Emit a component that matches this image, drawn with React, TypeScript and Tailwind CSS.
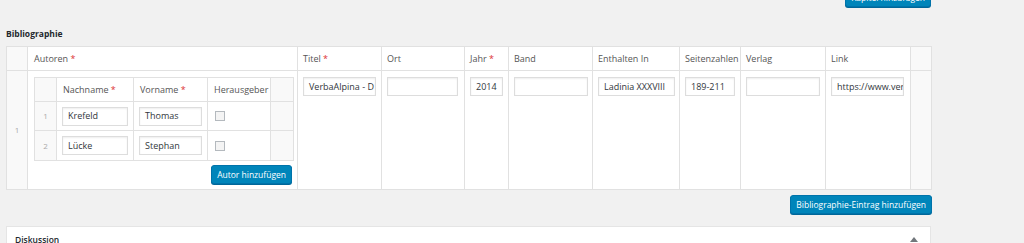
import React from 'react'

const outerCols = [
  { label: 'Titel', required: true, width: 84, value: 'VerbaAlpina - D', inputW: 73 },
  { label: 'Ort', width: 83, value: '', inputW: 71 },
  { label: 'Jahr', required: true, width: 44, value: '2014', inputW: 33 },
  { label: 'Band', width: 84, value: '', inputW: 74 },
  { label: 'Enthalten In', width: 87, value: 'Ladinia XXXVIII', inputW: 77 },
  { label: 'Seitenzahlen', width: 61, value: '189-211', inputW: 50 },
  { label: 'Verlag', width: 85, value: '', inputW: 74 },
  { label: 'Link', width: 85, value: 'https://www.ver', inputW: 73 },
]

const authors = [
  { last: 'Krefeld', first: 'Thomas' },
  { last: 'Lücke', first: 'Stephan' },
]

function Star() {
  return <span className="text-[#dc3232]"> *</span>
}

function TextField({ value, width }: { value: string; width: number }) {
  return (
    <div
      className="flex h-[19px] items-center overflow-hidden whitespace-nowrap border border-[#dddddd] bg-white px-[5px] text-[9px] text-[#32373c] shadow-[inset_0_1px_2px_rgba(0,0,0,0.07)]"
      style={{ width }}
    >
      {value}
    </div>
  )
}

function BlueButton({ children }: { children: React.ReactNode }) {
  return (
    <button
      type="button"
      className="h-[19px] rounded-[3px] border border-[#0073aa] bg-[#0085ba] px-[5px] text-[8.5px] leading-[17px] text-white shadow-[0_1px_0_#006799]"
    >
      {children}
    </button>
  )
}

function AuthorsTable() {
  return (
    <div className="ml-[6px] mt-[6px] w-[259px]">
      <table className="w-[259px] table-fixed border-collapse border border-[#e1e1e1] text-[9px] text-[#555]">
        <colgroup>
          <col className="w-[22px]" />
          <col className="w-[77px]" />
          <col className="w-[74px]" />
          <col className="w-[63px]" />
          <col className="w-[23px]" />
        </colgroup>
        <thead>
          <tr className="h-[24px]">
            <th className="border border-[#e1e1e1] bg-[#f9f9f9]" />
            <th className="border border-[#e1e1e1] bg-white pl-[6px] text-left font-normal">
              Nachname<Star />
            </th>
            <th className="border border-[#e1e1e1] bg-white pl-[6px] text-left font-normal">
              Vorname<Star />
            </th>
            <th className="border border-[#e1e1e1] bg-white pl-[6px] text-left font-normal">Herausgeber</th>
            <th className="border border-[#e1e1e1] bg-[#f9f9f9]" />
          </tr>
        </thead>
        <tbody>
          {authors.map((author, index) => (
            <tr key={author.last} className={index === 0 ? 'h-[29px]' : 'h-[30px]'}>
              <td className="border border-[#e1e1e1] bg-[#f9f9f9] text-center text-[8px] text-[#aaa]">{index + 1}</td>
              <td className="border border-[#e1e1e1] bg-white pl-[5px]">
                <TextField value={author.last} width={66} />
              </td>
              <td className="border border-[#e1e1e1] bg-white pl-[5px]">
                <TextField value={author.first} width={63} />
              </td>
              <td className="border border-[#e1e1e1] bg-white pl-[7px]">
                <span className="block h-[10px] w-[10px] border border-[#b4b9be] bg-[#f4f4f4]" />
              </td>
              <td className="border border-[#e1e1e1] bg-[#f9f9f9]" />
            </tr>
          ))}
        </tbody>
      </table>
      <div className="mt-[4px] flex justify-end pr-[1px]">
        <BlueButton>Autor hinzufügen</BlueButton>
      </div>
    </div>
  )
}

export default function App() {
  return (
    <div className="h-[243px] w-[1024px] overflow-hidden bg-[#f1f1f1] font-['Open_Sans','Liberation_Sans',sans-serif] text-[#32373c]">
      <div className="mt-[-12px] flex w-[931px] justify-end">
        <BlueButton>Kapitel hinzufügen</BlueButton>
      </div>

      <h3 className="ml-[6px] mt-[20px] text-[8.5px] font-bold leading-[14px] text-[#23282d]">Bibliographie</h3>

      <table className="ml-[6px] mt-[5px] w-[925px] table-fixed border-collapse border border-[#e1e1e1] text-[9px] text-[#555]">
        <colgroup>
          <col className="w-[21px]" />
          <col className="w-[270px]" />
          {outerCols.map((col) => (
            <col key={col.label} style={{ width: col.width }} />
          ))}
          <col className="w-[21px]" />
        </colgroup>
        <thead>
          <tr className="h-[24px]">
            <th className="border border-[#e1e1e1] bg-[#f9f9f9]" />
            <th className="border border-[#e1e1e1] bg-white pl-[6px] text-left font-normal">
              Autoren<Star />
            </th>
            {outerCols.map((col) => (
              <th key={col.label} className="whitespace-nowrap border border-[#e1e1e1] bg-white pl-[5px] text-left font-normal">
                {col.label}
                {col.required ? <Star /> : null}
              </th>
            ))}
            <th className="border border-[#e1e1e1] bg-[#f9f9f9]" />
          </tr>
        </thead>
        <tbody>
          <tr className="h-[119px]">
            <td className="border border-[#e1e1e1] bg-[#f9f9f9] text-center text-[8px] text-[#aaa]">1</td>
            <td className="border border-[#e1e1e1] bg-white align-top">
              <AuthorsTable />
            </td>
            {outerCols.map((col) => (
              <td key={col.label} className="border border-[#e1e1e1] bg-white pl-[5px] pt-[6px] align-top">
                <TextField value={col.value} width={col.inputW} />
              </td>
            ))}
            <td className="border border-[#e1e1e1] bg-[#f9f9f9]" />
          </tr>
        </tbody>
      </table>

      <div className="mt-[5px] flex w-[932px] justify-end">
        <BlueButton>Bibliographie-Eintrag hinzufügen</BlueButton>
      </div>

      <div className="ml-[6px] mt-[12px] flex h-[30px] w-[925px] items-start justify-between border border-[#e5e5e5] bg-white px-[8px] pt-[7px]">
        <span className="text-[8.5px] font-semibold text-[#23282d]">Diskussion</span>
        <span className="mr-[4px] mt-[3px] h-0 w-0 border-x-[4px] border-b-[5px] border-x-transparent border-b-[#72777c]" />
      </div>
    </div>
  )
}
